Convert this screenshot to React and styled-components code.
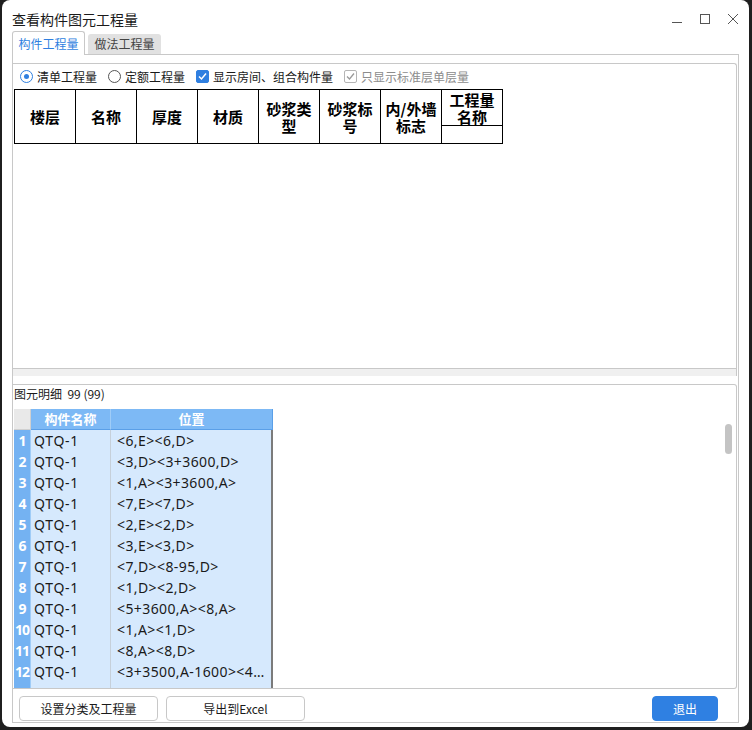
import React from 'react';
import styled, { createGlobalStyle } from 'styled-components';

const GlobalStyle = createGlobalStyle`
  html, body {
    margin: 0;
    padding: 0;
    background: #1f1f1f;
  }
  body {
    font-family: "Noto Sans CJK SC", "Noto Sans", sans-serif;
    color: #1a1a1a;
  }
  * { box-sizing: border-box; }
`;

const rows = [
  ['QTQ-1', '<6,E><6,D>'],
  ['QTQ-1', '<3,D><3+3600,D>'],
  ['QTQ-1', '<1,A><3+3600,A>'],
  ['QTQ-1', '<7,E><7,D>'],
  ['QTQ-1', '<2,E><2,D>'],
  ['QTQ-1', '<3,E><3,D>'],
  ['QTQ-1', '<7,D><8-95,D>'],
  ['QTQ-1', '<1,D><2,D>'],
  ['QTQ-1', '<5+3600,A><8,A>'],
  ['QTQ-1', '<1,A><1,D>'],
  ['QTQ-1', '<8,A><8,D>'],
  ['QTQ-1', '<3+3500,A-1600><4+3500,A-1600>'],
  ['', ''],
];

const headCols = ['楼层', '名称', '厚度', '材质', ['砂浆类', '型'], ['砂浆标', '号'], ['内/外墙', '标志']];

export default function App() {
  return (
    <>
      <GlobalStyle />
      <Window>
        <TitleBar>
          <Title>查看构件图元工程量</Title>
          <Controls>
            <svg width="12" height="12" viewBox="0 0 12 12">
              <line x1="1" y1="9.5" x2="11" y2="9.5" stroke="#555" strokeWidth="1" />
            </svg>
            <svg width="12" height="12" viewBox="0 0 12 12">
              <rect x="1.5" y="1.5" width="9" height="9" fill="none" stroke="#555" strokeWidth="1" />
            </svg>
            <svg width="12" height="12" viewBox="0 0 12 12">
              <path d="M1 1 L11 11 M11 1 L1 11" stroke="#555" strokeWidth="1" />
            </svg>
          </Controls>
        </TitleBar>

        <TabRow>
          <Tab $active>构件工程量</Tab>
          <Tab>做法工程量</Tab>
        </TabRow>

        <Panel>
          <TopBox>
            <OptionRow>
              <Option><Radio $checked />清单工程量</Option>
              <Option><Radio />定额工程量</Option>
              <Option>
                <Check>
                  <svg width="11" height="11" viewBox="0 0 11 11">
                    <path d="M2 5.5 L4.5 8 L9 2.5" fill="none" stroke="#fff" strokeWidth="1.5" />
                  </svg>
                </Check>
                显示房间、组合构件量
              </Option>
              <Option $disabled>
                <Check $disabled>
                  <svg width="11" height="11" viewBox="0 0 11 11">
                    <path d="M2 5.5 L4.5 8 L9 2.5" fill="none" stroke="#9a9a9a" strokeWidth="1.3" />
                  </svg>
                </Check>
                只显示标准层单层量
              </Option>
            </OptionRow>

            <HeadTable>
              {headCols.map((c, i) => (
                <HeadCell key={i} $span>
                  {Array.isArray(c) ? <>{c[0]}<br />{c[1]}</> : c}
                </HeadCell>
              ))}
              <HeadCell>工程量<br />名称</HeadCell>
              <HeadCell />
            </HeadTable>

            <Spacer />
            <HScrollTrack />
          </TopBox>

          <LowerBox>
            <DetailLabel>图元明细&nbsp;&nbsp;99 (99)</DetailLabel>
            <Grid>
              <GridRow>
                <Corner />
                <ColHead>构件名称</ColHead>
                <ColHead $last>位置</ColHead>
              </GridRow>
              {rows.map((r, i) => (
                <GridRow key={i}>
                  <RowNum>{r[0] ? i + 1 : ''}</RowNum>
                  <Cell>{r[0]}</Cell>
                  <Cell $last>{r[1]}</Cell>
                </GridRow>
              ))}
            </Grid>
            <ScrollThumb />
          </LowerBox>

          <ButtonRow>
            <Button>设置分类及工程量</Button>
            <Button>导出到Excel</Button>
            <PrimaryButton>退出</PrimaryButton>
          </ButtonRow>
        </Panel>
      </Window>
    </>
  );
}

const Window = styled.div`
  margin-left: 2px;
  width: 747px;
  height: 727px;
  background: #fff;
  border-radius: 8px;
  overflow: hidden;
  display: flex;
  flex-direction: column;
  padding: 0 10px 4px 10px;
`;

const TitleBar = styled.div`
  height: 31px;
  display: flex;
  align-items: flex-start;
  padding-top: 8px;
`;

const Title = styled.div`
  font-size: 14px;
  line-height: 22px;
  color: #1a1a1a;
`;

const Controls = styled.div`
  margin-left: auto;
  display: flex;
  gap: 16px;
  padding-top: 5px;
`;

const TabRow = styled.div`
  height: 23px;
  display: flex;
  align-items: flex-end;
  gap: 3px;
  position: relative;
  z-index: 1;
`;

const Tab = styled.div`
  width: 73px;
  height: ${p => (p.$active ? '24px' : '20px')};
  margin-bottom: ${p => (p.$active ? '-1px' : '0')};
  background: ${p => (p.$active ? '#fff' : '#e1e1e1')};
  border: ${p => (p.$active ? '1px solid #c8c8c8' : 'none')};
  border-bottom: none;
  border-radius: 3px 3px 0 0;
  color: ${p => (p.$active ? '#2f7fe0' : '#444')};
  font-size: 12px;
  line-height: ${p => (p.$active ? '23px' : '20px')};
  text-align: center;
`;

const Panel = styled.div`
  flex: 1;
  border: 1px solid #c8c8c8;
  display: flex;
  flex-direction: column;
  padding: 8px 1px 0 0;
`;

const TopBox = styled.div`
  height: 313px;
  border: 1px solid #c8c8c8;
  border-bottom: none;
  border-left: none;
  border-radius: 0 3px 0 0;
  display: flex;
  flex-direction: column;
`;

const OptionRow = styled.div`
  height: 25px;
  display: flex;
  align-items: center;
  padding-left: 7px;
  font-size: 12px;
`;

const Option = styled.label`
  display: flex;
  align-items: center;
  gap: 4px;
  margin-right: 11px;
  color: ${p => (p.$disabled ? '#8c8c8c' : '#1a1a1a')};
  white-space: nowrap;
`;

const Radio = styled.span`
  width: 13px;
  height: 13px;
  border-radius: 50%;
  border: 1px solid ${p => (p.$checked ? '#2f7fe0' : '#555')};
  display: flex;
  align-items: center;
  justify-content: center;
  &::after {
    content: '';
    width: 5px;
    height: 5px;
    border-radius: 50%;
    background: ${p => (p.$checked ? '#2f7fe0' : 'transparent')};
  }
`;

const Check = styled.span`
  width: 13px;
  height: 13px;
  border-radius: 2px;
  background: ${p => (p.$disabled ? '#fff' : '#2f7fe0')};
  border: 1px solid ${p => (p.$disabled ? '#b5b5b5' : '#2f7fe0')};
  display: flex;
  align-items: center;
  justify-content: center;
`;

const HeadTable = styled.div`
  margin-left: 1px;
  width: 489px;
  display: grid;
  grid-template-columns: repeat(8, 60px);
  grid-template-rows: 35px 17px;
  grid-auto-flow: column;
  gap: 1px;
  padding: 1px;
  background: #000;
`;

const HeadCell = styled.div`
  grid-row: ${p => (p.$span ? 'span 2' : 'auto')};
  background: #fff;
  display: flex;
  align-items: center;
  justify-content: center;
  text-align: center;
  font-size: 15px;
  font-weight: 700;
  line-height: 17px;
  color: #000;
`;

const Spacer = styled.div`
  flex: 1;
`;

const HScrollTrack = styled.div`
  height: 8px;
  border-top: 1px solid #c8c8c8;
  background: #f0f0f0;
`;

const LowerBox = styled.div`
  margin-top: 8px;
  height: 305px;
  border: 1px solid #c8c8c8;
  border-left: none;
  border-radius: 0 3px 3px 0;
  position: relative;
  overflow: hidden;
  display: flex;
  flex-direction: column;
`;

const DetailLabel = styled.div`
  height: 24px;
  flex-shrink: 0;
  padding-left: 1px;
  font-size: 12px;
  line-height: 17px;
  color: #1a1a1a;
`;

const Grid = styled.div`
  margin-left: 1px;
  display: flex;
  flex-direction: column;
  overflow: hidden;
`;

const GridRow = styled.div`
  display: grid;
  grid-template-columns: 17px 80px 162px;
  height: 21px;
  flex-shrink: 0;
`;

const Corner = styled.div`
  background: #e9e9e9;
  border-right: 1px solid #d0d0d0;
  border-bottom: 1px solid #d0d0d0;
`;

const ColHead = styled.div`
  background: #7db9f5;
  border-right: 1px solid ${p => (p.$last ? '#5a9fe8' : '#9fccf7')};
  border-bottom: 1px solid #5a9fe8;
  color: #fff;
  font-weight: 700;
  font-size: 13px;
  line-height: 20px;
  text-align: center;
`;

const RowNum = styled.div`
  background: #74b2f2;
  border-bottom: 1px solid #9fccf7;
  border-right: 1px solid #9fccf7;
  color: #fff;
  font-weight: 700;
  font-size: 14px;
  line-height: 21px;
  text-align: center;
  font-family: "Noto Sans", sans-serif;
  letter-spacing: -1px;
`;

const Cell = styled.div`
  background: #d6e9fd;
  border-bottom: 1px solid #c6d0da;
  border-right: ${p => (p.$last ? '2px solid #7b7b7b' : '1px solid #c6d0da')};
  font-family: "Noto Sans", "Noto Sans CJK SC", sans-serif;
  font-size: 14px;
  letter-spacing: ${p => (p.$last ? '0.4px' : '0.7px')};
  line-height: 21px;
  padding-left: ${p => (p.$last ? '6px' : '3px')};
  padding-right: 3px;
  color: #1a1a1a;
  white-space: nowrap;
  overflow: hidden;
  text-overflow: ellipsis;
`;

const ScrollThumb = styled.div`
  position: absolute;
  right: 4px;
  top: 39px;
  width: 7px;
  height: 30px;
  border-radius: 4px;
  background: #c4c4c4;
`;

const ButtonRow = styled.div`
  margin-top: 7px;
  height: 25px;
  display: flex;
  gap: 8px;
  padding-left: 6px;
  padding-right: 19px;
`;

const Button = styled.button`
  width: 139px;
  height: 25px;
  border: 1px solid #c8c8c8;
  border-radius: 4px;
  background: #fff;
  font-family: "Noto Sans CJK SC", sans-serif;
  font-size: 12px;
  color: #1a1a1a;
  padding: 0;
`;

const PrimaryButton = styled(Button)`
  width: 66px;
  margin-left: auto;
  background: #2f80e2;
  border-color: #2f80e2;
  color: #fff;
`;
